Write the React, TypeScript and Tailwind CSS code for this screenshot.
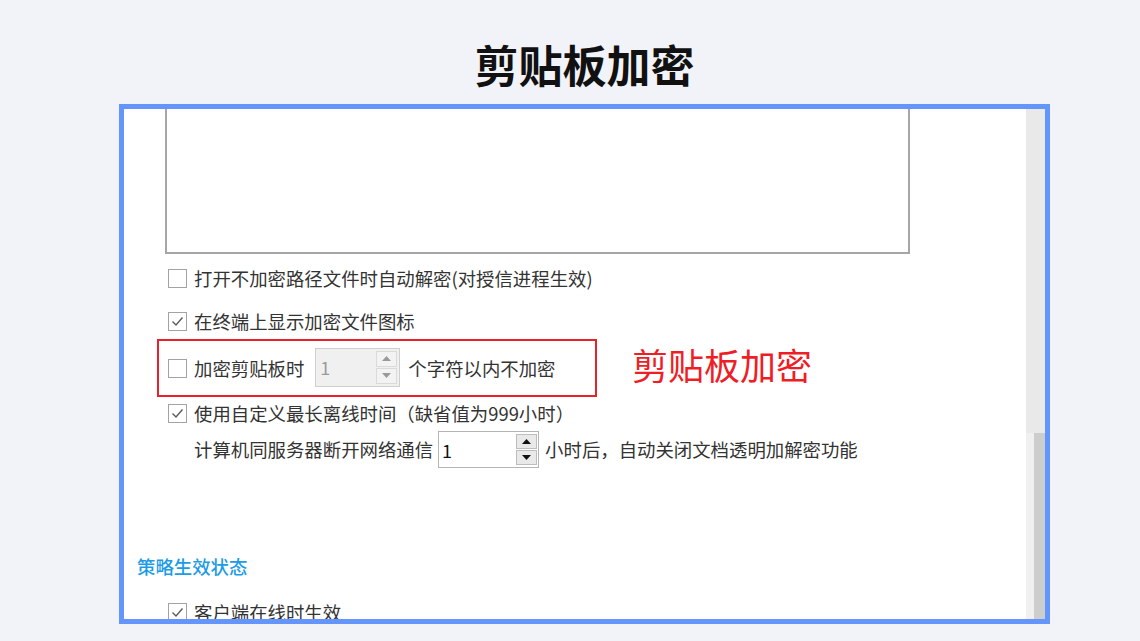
import React from 'react';

const font = { fontFamily: '"Noto Sans CJK SC", "Noto Sans", sans-serif' };

function Checkbox({ checked }: { checked?: boolean }) {
  return (
    <div className="w-[19px] h-[19px] border border-[#a3a3a3] bg-white flex items-center justify-center shrink-0">
      {checked && (
        <svg width="13" height="11" viewBox="0 0 13 11">
          <path d="M1.5 5.5 L5 9 L11.5 1.5" fill="none" stroke="#5a5a5a" strokeWidth="1.4" />
        </svg>
      )}
    </div>
  );
}

function SpinButtons({ disabled }: { disabled?: boolean }) {
  const fill = disabled ? '#9a9a9a' : '#111';
  const btn = disabled
    ? 'border border-[#dadada] bg-[#f3f3f3]'
    : 'border border-[#bdbdbd] bg-[#e9e9e9]';
  return (
    <div className="flex flex-col gap-[1px] w-[21px] h-full py-[2px]">
      <div className={`flex-1 flex items-center justify-center ${btn}`}>
        <svg width="9" height="5" viewBox="0 0 9 5">
          <path d="M4.5 0 L9 5 L0 5 Z" fill={fill} />
        </svg>
      </div>
      <div className={`flex-1 flex items-center justify-center ${btn}`}>
        <svg width="9" height="5" viewBox="0 0 9 5">
          <path d="M0 0 L9 0 L4.5 5 Z" fill={fill} />
        </svg>
      </div>
    </div>
  );
}

function Row({ checked, children }: { checked?: boolean; children: React.ReactNode }) {
  return (
    <div className="flex items-center gap-[7px] h-[20px] pl-[44px] text-[18.4px] text-[#333] leading-none whitespace-nowrap">
      <Checkbox checked={checked} />
      <span>{children}</span>
    </div>
  );
}

export default function App() {
  return (
    <div className="w-[1140px] h-[641px] bg-[#f2f3f8] overflow-hidden" style={font}>
      <div className="ml-[119px] w-[931px] pt-[42px]">
        <h1 className="text-center text-[44px] leading-[44px] font-bold text-[#111]">剪贴板加密</h1>

        <div className="mt-[18px] h-[520px] border-[5px] border-[#6495fc] bg-white flex overflow-hidden">
          <div className="flex-1 flex flex-col">
            <div className="ml-[41px] w-[745px] h-[145px] border-2 border-t-0 border-[#a6a6a6] shrink-0" />

            <div className="mt-[14px]">
              <Row>打开不加密路径文件时自动解密(对授信进程生效)</Row>
            </div>
            <div className="mt-[23px]">
              <Row checked>在终端上显示加密文件图标</Row>
            </div>

            <div className="mt-[8px] flex items-center">
              <div className="ml-[33px] w-[440px] h-[58px] border-2 border-[#e8212b] flex items-center gap-[7px] pl-[9px] text-[18.4px] text-[#333] leading-none whitespace-nowrap">
                <Checkbox />
                <span>加密剪贴板时</span>
                <div className="ml-[4px] w-[85px] h-[39px] -mt-[2px] border border-[#cfcfcf] bg-[#f0f0f0] flex items-center justify-between pl-[4px] pr-[2px]">
                  <span className="text-[#9b9b9b] text-[18px]">1</span>
                  <SpinButtons disabled />
                </div>
                <span className="ml-[1px]">个字符以内不加密</span>
              </div>
              <span className="ml-[35px] -mt-[8px] text-[36px] leading-none text-[#ee1d26]">剪贴板加密</span>
            </div>

            <div className="mt-[6px]">
              <Row checked>使用自定义最长离线时间（缺省值为999小时）</Row>
            </div>

            <div className="mt-[8px] flex items-center pl-[70px] text-[18.4px] text-[#333] leading-none whitespace-nowrap">
              <span>计算机同服务器断开网络通信</span>
              <div className="ml-[5px] w-[101px] h-[37px] border border-[#b5b5b5] bg-white flex items-center justify-between pl-[3px] pr-[1px]">
                <span className="text-[#111] text-[18px]">1</span>
                <SpinButtons />
              </div>
              <span className="ml-[6px]">小时后，自动关闭文档透明加解密功能</span>
            </div>

            <div className="mt-[89px] h-[24px] flex items-center pl-[13px] text-[18.4px] font-medium text-[#1c9be6] leading-none">
              策略生效状态
            </div>

            <div className="mt-[27px]">
              <Row checked>客户端在线时生效</Row>
            </div>
          </div>

          <div className="w-[19px] flex flex-col shrink-0">
            <div className="h-[324px] bg-[#e9e9e9]" />
            <div className="flex-1 bg-[#f0f0f0] flex justify-end">
              <div className="w-[11px] h-full bg-[#cdcdcd]" />
            </div>
          </div>
        </div>
      </div>
    </div>
  );
}
